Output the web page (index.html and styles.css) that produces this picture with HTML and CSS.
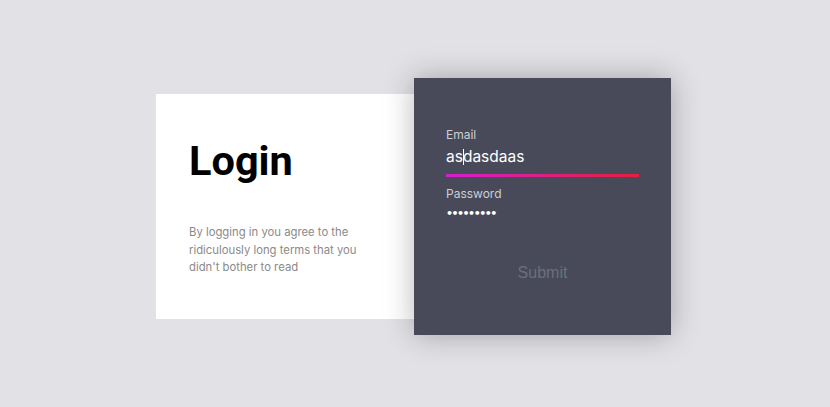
FILE: index.html
```html
<!DOCTYPE html>
<html>
<head>
<meta charset="utf-8">
<link rel="stylesheet" href="styles.css">
</head>
<body>
<div class="stage">
  <div class="intro">
    <h1 class="title">Login</h1>
    <p class="terms">By logging in you agree to the ridiculously long terms that you didn't bother to read</p>
  </div>
  <form class="panel">
    <label class="label">Email</label>
    <div class="value">as<span class="caret"></span>dasdaas</div>
    <div class="underline"></div>
    <label class="label pw">Password</label>
    <div class="dots">•••••••••</div>
    <div class="submit">Submit</div>
  </form>
</div>
</body>
</html>
```

FILE: styles.css
```css
html, body {
  margin: 0;
  padding: 0;
  background: #e1e1e6;
  width: 830px;
  height: 407px;
  overflow: hidden;
  font-family: Inter, "Noto Sans", sans-serif;
}
.stage {
  display: flex;
  align-items: center;
  padding-left: 156px;
  padding-top: 78px;
  height: 257px;
}
.intro {
  background: #ffffff;
  width: 258px;
  height: 225px;
  box-sizing: border-box;
  padding: 39px 33px 0 33px;
}
.title {
  margin: 0;
  font-family: Roboto, sans-serif;
  font-size: 41.5px;
  font-weight: 700;
  color: #000;
  line-height: 56px;
}
.terms {
  margin: 35px 0 0 0;
  font-size: 11.3px;
  line-height: 17.5px;
  color: #8a8a8a;
  width: 180px;
}
.panel {
  background: #484a59;
  width: 257px;
  height: 257px;
  box-sizing: border-box;
  padding: 49px 32px 0 32px;
  box-shadow: 0 0 28px rgba(0, 0, 0, 0.28);
  display: flex;
  flex-direction: column;
  position: relative;
  z-index: 1;
}
.label {
  font-size: 12px;
  color: #cdced6;
  line-height: 15px;
}
.value {
  margin-top: 5px;
  font-size: 15.5px;
  color: #ffffff;
  line-height: 20px;
}
.caret {
  display: inline-block;
  width: 1px;
  height: 16px;
  background: #fff;
  vertical-align: -3px;
  margin: 0 -1px 0 0;
}
.underline {
  margin-top: 7px;
  height: 3px;
  background: linear-gradient(90deg, #d41fd0, #e61f3a);
}
.pw {
  margin-top: 9px;
}
.dots {
  margin-top: 5px;
  font-size: 11px;
  color: #fff;
  letter-spacing: -1.5px;
  line-height: 16px;
  font-family: "DejaVu Sans", sans-serif;
  font-weight: 700;
}
.submit {
  margin-top: 42px;
  text-align: center;
  font-family: "Liberation Sans", Arial, sans-serif;
  font-size: 16px;
  color: #6c6f7d;
}
```
